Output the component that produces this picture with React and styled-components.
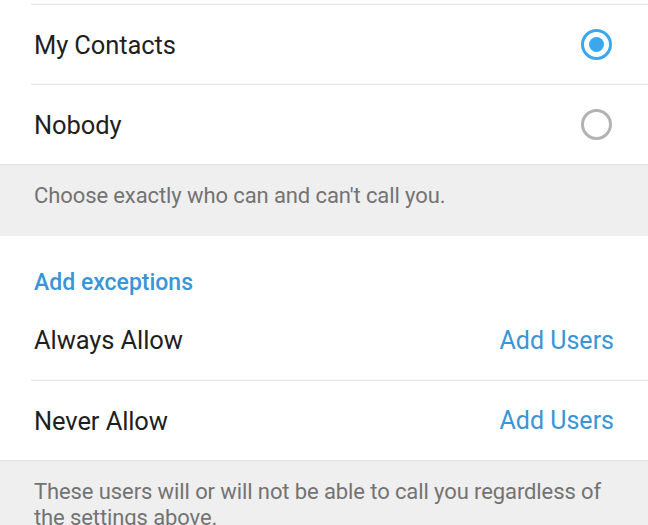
import React from 'react';
import styled, { createGlobalStyle } from 'styled-components';

const GlobalStyle = createGlobalStyle`
  html, body {
    margin: 0;
    padding: 0;
    background: #ffffff;
  }
  body {
    font-family: Roboto, "Noto Sans", sans-serif;
    -webkit-font-smoothing: antialiased;
  }
`;

const BLUE = '#3a95d6';

export default function App() {
  return (
    <>
      <GlobalStyle />
      <Styled.Page>
        <Styled.Section>
          <Styled.TopSpacer />
          <Styled.Row divider>
            <Styled.Label>My Contacts</Styled.Label>
            <Radio checked />
          </Styled.Row>
          <Styled.Row divider>
            <Styled.Label>Nobody</Styled.Label>
            <Radio />
          </Styled.Row>
        </Styled.Section>

        <Styled.Hint height={72}>
          <Styled.HintText>Choose exactly who can and can't call you.</Styled.HintText>
        </Styled.Hint>

        <Styled.Section>
          <Styled.Header>Add exceptions</Styled.Header>
          <Styled.Row>
            <Styled.Label>Always Allow</Styled.Label>
            <Styled.Action>Add Users</Styled.Action>
          </Styled.Row>
          <Styled.Row divider>
            <Styled.Label>Never Allow</Styled.Label>
            <Styled.Action>Add Users</Styled.Action>
          </Styled.Row>
        </Styled.Section>

        <Styled.Hint>
          <Styled.HintText>
            These users will or will not be able to call you regardless of the settings above.
          </Styled.HintText>
        </Styled.Hint>
      </Styled.Page>
    </>
  );
}

function Radio({ checked }) {
  return (
    <Styled.Radio checked={checked}>
      {checked && <Styled.RadioDot />}
    </Styled.Radio>
  );
}

const Styled = {};

Styled.Page = styled.div`
  width: 648px;
  height: 525px;
  overflow: hidden;
  background: #efefef;
`;

Styled.Section = styled.div`
  background: #ffffff;
`;

Styled.TopSpacer = styled.div`
  height: 4px;
`;

Styled.Row = styled.div`
  display: flex;
  align-items: center;
  justify-content: space-between;
  height: 80px;
  padding: 0 34px;
  box-sizing: border-box;
  border-top: ${(p) => (p.divider ? '1px solid #e6e6e6' : 'none')};
  border-image: ${(p) => (p.divider ? 'linear-gradient(to right, transparent 32px, #e6e6e6 32px) 1' : 'none')};
`;

Styled.Label = styled.span`
  font-size: 25.5px;
  color: #1f1f1f;
  letter-spacing: -0.1px;
`;

Styled.Action = styled.span`
  font-size: 25px;
  color: ${BLUE};
`;

Styled.Header = styled.div`
  padding: 32px 34px 0;
  height: 64px;
  box-sizing: border-box;
  font-size: 23px;
  line-height: 30px;
  font-weight: 500;
  color: ${BLUE};
`;

Styled.Hint = styled.div`
  height: ${(p) => (p.height ? `${p.height}px` : 'auto')};
  padding: 19px 34px 0;
  box-sizing: border-box;
  background: #efefef;
  box-shadow: inset 0 2px 2px -1px rgba(0, 0, 0, 0.06);
`;

Styled.HintText = styled.p`
  margin: 0;
  font-size: 22px;
  line-height: 25.5px;
  letter-spacing: -0.1px;
  color: #737373;
`;

Styled.Radio = styled.span`
  display: flex;
  align-items: center;
  justify-content: center;
  width: 31px;
  height: 31px;
  margin-right: 2px;
  box-sizing: border-box;
  border-radius: 50%;
  border: 3.5px solid ${(p) => (p.checked ? '#3aa7ee' : '#b3b3b3')};
`;

Styled.RadioDot = styled.span`
  width: 15px;
  height: 15px;
  border-radius: 50%;
  background: #3aa7ee;
`;
